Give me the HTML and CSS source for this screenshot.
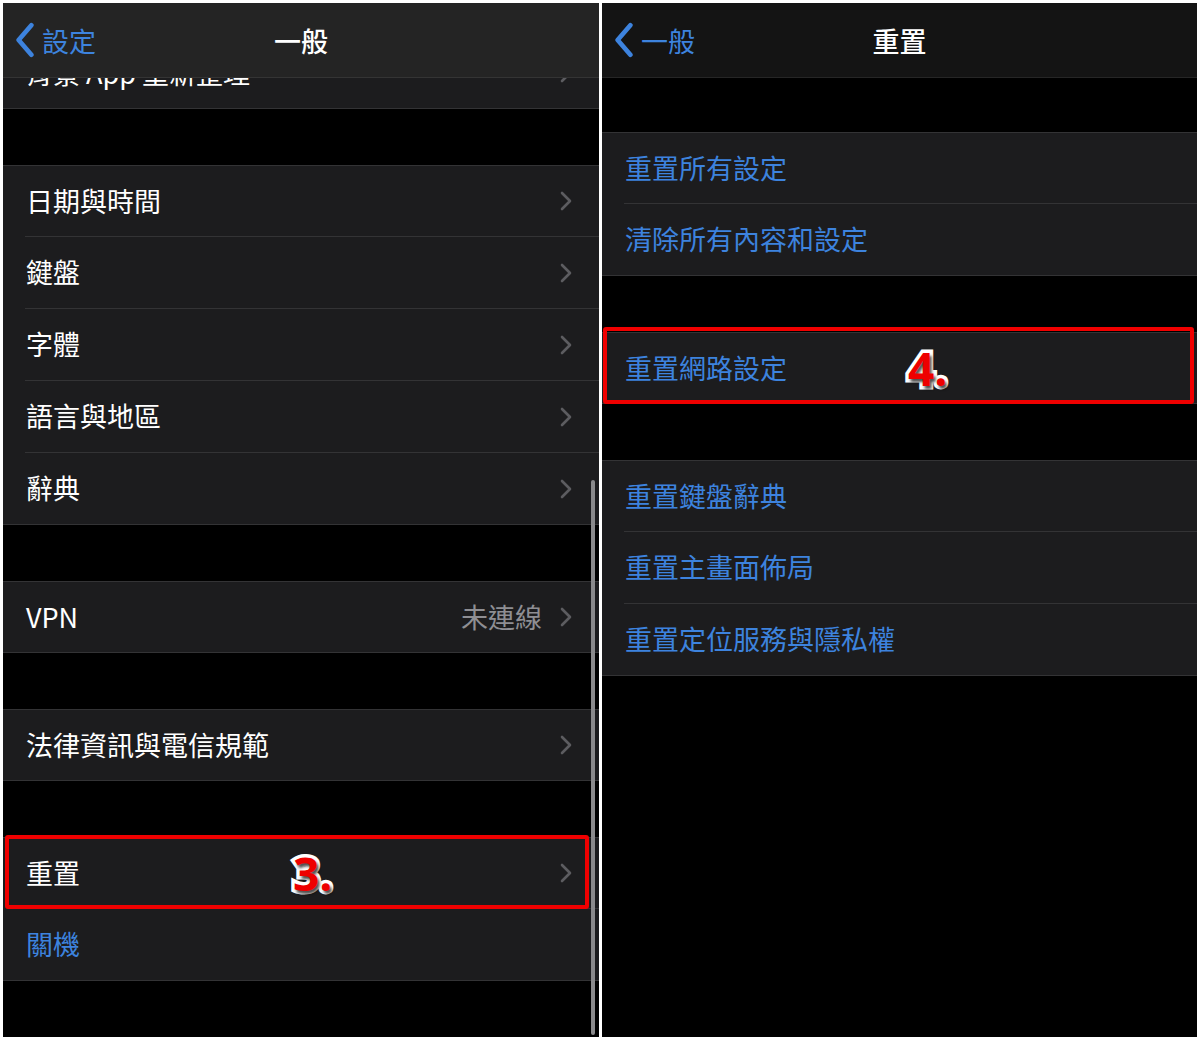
FILE: index.html
```html
<!DOCTYPE html>
<html lang="zh-Hant">
<head>
  <meta charset="UTF-8" />
  <meta name="viewport" content="width=device-width, initial-scale=1.0"/>
  <title>重置網路設定</title>
  <link rel="stylesheet" href="styles.css">
</head>
<body>
  <div class="screens">

    <!-- 一般 -->
    <section class="phone phone-general">
      <header class="navbar navbar-general">
        <a class="back">
          <svg class="back-icon" viewBox="0 0 20 34"><path d="M16 3 L4 17 L16 31"/></svg>
          <span>設定</span>
        </a>
        <h1 class="nav-title">一般</h1>
      </header>

      <div class="list list-general">
        <div class="group group-clipped">
          <div class="row"><span class="label">背景 App 重新整理</span><svg class="chevron" viewBox="0 0 12 20"><path d="M2 2 L10 10 L2 18"/></svg></div>
        </div>

        <div class="group">
          <div class="row"><span class="label">日期與時間</span><svg class="chevron" viewBox="0 0 12 20"><path d="M2 2 L10 10 L2 18"/></svg></div>
          <div class="row"><span class="label">鍵盤</span><svg class="chevron" viewBox="0 0 12 20"><path d="M2 2 L10 10 L2 18"/></svg></div>
          <div class="row"><span class="label">字體</span><svg class="chevron" viewBox="0 0 12 20"><path d="M2 2 L10 10 L2 18"/></svg></div>
          <div class="row"><span class="label">語言與地區</span><svg class="chevron" viewBox="0 0 12 20"><path d="M2 2 L10 10 L2 18"/></svg></div>
          <div class="row"><span class="label">辭典</span><svg class="chevron" viewBox="0 0 12 20"><path d="M2 2 L10 10 L2 18"/></svg></div>
        </div>

        <div class="group">
          <div class="row"><span class="label">VPN</span><span class="value">未連線</span><svg class="chevron" viewBox="0 0 12 20"><path d="M2 2 L10 10 L2 18"/></svg></div>
        </div>

        <div class="group">
          <div class="row"><span class="label">法律資訊與電信規範</span><svg class="chevron" viewBox="0 0 12 20"><path d="M2 2 L10 10 L2 18"/></svg></div>
        </div>

        <div class="group">
          <div class="row">
            <span class="label">重置</span>
            <svg class="chevron" viewBox="0 0 12 20"><path d="M2 2 L10 10 L2 18"/></svg>
            <div class="callout callout-left"></div>
            <span class="step step-3">3.</span>
          </div>
          <div class="row"><span class="label action">關機</span></div>
        </div>
      </div>

      <div class="scrollbar"></div>
    </section>

    <!-- 重置 -->
    <section class="phone phone-reset">
      <header class="navbar navbar-reset">
        <a class="back">
          <svg class="back-icon" viewBox="0 0 20 34"><path d="M16 3 L4 17 L16 31"/></svg>
          <span>一般</span>
        </a>
        <h1 class="nav-title">重置</h1>
      </header>

      <div class="list list-reset">
        <div class="group">
          <div class="row"><span class="label action">重置所有設定</span></div>
          <div class="row"><span class="label action">清除所有內容和設定</span></div>
        </div>

        <div class="group">
          <div class="row">
            <span class="label action">重置網路設定</span>
            <div class="callout callout-right"></div>
            <span class="step step-4">4.</span>
          </div>
        </div>

        <div class="group">
          <div class="row"><span class="label action">重置鍵盤辭典</span></div>
          <div class="row"><span class="label action">重置主畫面佈局</span></div>
          <div class="row"><span class="label action">重置定位服務與隱私權</span></div>
        </div>
      </div>
    </section>

  </div>
</body>
</html>
```

FILE: styles.css
```css
body {
  margin: 0;
  background: #ffffff;
  font-family: "Noto Sans CJK TC", "Noto Sans", sans-serif;
  color: #ffffff;
}

.screens {
  display: flex;
  gap: 3px;
  padding: 3px;
}

.phone {
  position: relative;
  height: 1034px;
  background: #000;
  overflow: hidden;
}

.phone-general {
  width: 596px;
}

.phone-reset {
  width: 595px;
}

/* nav bar sits over the scrolled list */
.navbar {
  position: absolute;
  top: 0;
  left: 0;
  right: 0;
  height: 74px;
  display: flex;
  align-items: center;
  justify-content: center;
  border-bottom: 1px solid #343434;
  z-index: 3;
}

.navbar-general {
  background: #242424;
}

.navbar-reset {
  background: #141414;
  border-bottom-color: #262626;
}

.nav-title {
  margin: 0;
  font-size: 27px;
  font-weight: 500;
  line-height: 1;
}

.back {
  position: absolute;
  left: 11px;
  top: 0;
  bottom: 0;
  display: flex;
  align-items: center;
  gap: 6px;
  color: #3d83de;
  font-size: 27px;
  line-height: 1;
}

.back-icon {
  width: 22px;
  height: 36px;
  fill: none;
  stroke: #3d83de;
  stroke-width: 4.4;
  stroke-linecap: round;
  stroke-linejoin: round;
}

.list-general {
  padding-top: 35px;
}

.list-reset {
  padding-top: 129px;
}

.group {
  margin-bottom: 56px;
  border-top: 1px solid #333335;
  border-bottom: 1px solid #333335;
  background: #1c1c1e;
}

.group-clipped {
  border-top: none;
}

.row {
  position: relative;
  display: flex;
  align-items: center;
  height: 70px;
  padding: 0 27px 0 23px;
  box-sizing: border-box;
}

.row + .row {
  border-top: 1px solid transparent;
  height: 72px;
}

.row + .row::before {
  content: "";
  position: absolute;
  top: -1px;
  left: 22px;
  right: 0;
  height: 1px;
  background: #333335;
}

.label {
  flex: 1;
  font-size: 27px;
  line-height: 1.2;
}

.label.action {
  color: #3d83de;
}

.value {
  font-size: 27px;
  line-height: 1.2;
  color: #8e8e93;
  margin-right: 18px;
}

.chevron {
  width: 12px;
  height: 20px;
  fill: none;
  stroke: #5c5c60;
  stroke-width: 2.6;
  stroke-linecap: round;
  stroke-linejoin: round;
}

.scrollbar {
  position: absolute;
  left: 588px;
  top: 477px;
  bottom: 2px;
  width: 4px;
  border-radius: 2px;
  background: #8a8a8c;
  z-index: 2;
}

/* red annotation boxes */
.callout {
  position: absolute;
  border: 4px solid #f00000;
  border-radius: 3px;
  z-index: 2;
}

.callout-left {
  left: 2px;
  right: 10px;
  top: -3px;
  bottom: -1px;
}

.callout-right {
  left: 1px;
  right: 3px;
  top: -6px;
  bottom: -1px;
}

.step {
  position: absolute;
  top: 50%;
  transform: translateY(-50%);
  font-family: "Open Sans", "Liberation Sans", sans-serif;
  font-weight: 700;
  font-size: 46px;
  line-height: 1;
  color: #ee0000;
  -webkit-text-stroke: 7px #ffffff;
  paint-order: stroke fill;
  text-shadow: 2px 3px 3px rgba(0, 0, 0, 0.7);
  z-index: 3;
}

.step-3 {
  left: 290px;
}

.step-4 {
  left: 306px;
}
```
